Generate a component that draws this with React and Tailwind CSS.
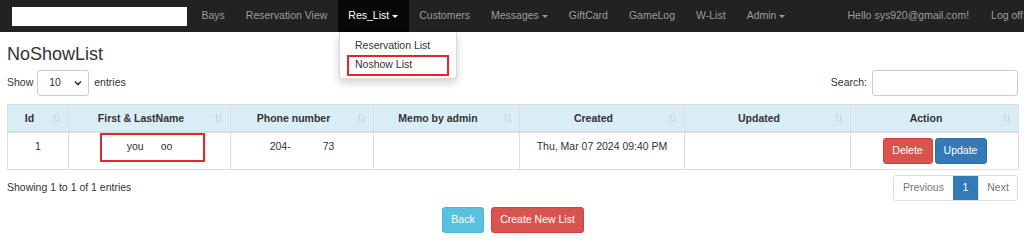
import React from 'react';

const navItems = [
  { label: 'Bays' },
  { label: 'Reservation View' },
  { label: 'Res_List', caret: true, active: true },
  { label: 'Customers' },
  { label: 'Messages', caret: true },
  { label: 'GiftCard' },
  { label: 'GameLog' },
  { label: 'W-List' },
  { label: 'Admin', caret: true },
];

const columns = [
  { label: 'Id', width: 'w-[61px]' },
  { label: 'First & LastName', width: 'w-[162px]' },
  { label: 'Phone number', width: 'w-[143px]' },
  { label: 'Memo by admin', width: 'w-[146px]' },
  { label: 'Created', width: 'w-[165px]' },
  { label: 'Updated', width: 'w-[166px]' },
  { label: 'Action', width: 'w-[168px]' },
];

const Caret = ({ color }) => (
  <span
    className={`ml-[3px] inline-block h-0 w-0 border-x-[3px] border-t-[3px] border-x-transparent align-middle ${color}`}
  />
);

const SortIcon = () => (
  <svg width="9" height="10" viewBox="0 0 9 10" className="absolute right-[7px] top-[8px]">
    <path d="M2.5 9V1M0.8 2.8L2.5 1L4.2 2.8" stroke="#c9d6dd" strokeWidth="1" fill="none" />
    <path d="M6.5 1V9M4.8 7.2L6.5 9L8.2 7.2" stroke="#c9d6dd" strokeWidth="1" fill="none" />
  </svg>
);

const App = () => {
  return (
    <div className="relative min-h-[245px] bg-white font-['Liberation_Sans',Arial,sans-serif] text-[10.5px] text-[#333]">
      {/* Navbar */}
      <div className="flex h-[32px] items-stretch overflow-hidden bg-[#222]">
        <div className="flex items-center pl-[12px]">
          <div className="h-[19px] w-[175px] bg-white" />
        </div>
        <ul className="ml-[4px] flex items-stretch">
          {navItems.map((item) => (
            <li key={item.label} className="relative flex">
              <span
                className={`flex items-center px-[10.5px] ${
                  item.active ? 'bg-[#080808] text-white' : 'text-[#9d9d9d]'
                }`}
              >
                {item.label}
                {item.caret && <Caret color={item.active ? 'border-t-white' : 'border-t-[#9d9d9d]'} />}
              </span>
            </li>
          ))}
        </ul>
        <ul className="ml-auto flex items-stretch text-[#9d9d9d]">
          <li className="flex items-center px-[11px]">Hello sys920@gmail.com!</li>
          <li className="flex items-center pl-[11px] pr-[1px]">Log off</li>
        </ul>
      </div>

      {/* Res_List dropdown */}
      <div className="absolute left-[339px] top-[32px] h-[47px] w-[118px] rounded-b-[3px] border border-t-0 border-black/15 bg-white pt-[4px] shadow-[0_4px_8px_rgba(0,0,0,0.18)]">
        <div className="h-[19px] pl-[15px] leading-[19px] text-[#333]">Reservation List</div>
        <div className="h-[19px] pl-[15px] leading-[19px] text-[#333]">Noshow List</div>
        <div className="absolute left-[7px] top-[23px] h-[21px] w-[102px] border-2 border-[#e3262a]" />
      </div>

      {/* Content */}
      <div className="pl-[7px] pr-[6px]">
        <h2 className="mt-[10px] h-[24px] text-[18px] leading-[24px] font-normal">NoShowList</h2>

        <div className="mt-[4px] flex h-[26px] items-center justify-between">
          <div className="flex items-center">
            <span>Show</span>
            <div className="ml-[4px] flex h-[26px] w-[52px] items-center justify-between rounded-[3px] border border-[#ccc] bg-white pl-[11px] pr-[6px]">
              <span>10</span>
              <svg width="8" height="6" viewBox="0 0 8 6">
                <path d="M1 1.5L4 4.5L7 1.5" stroke="#333" strokeWidth="1.6" fill="none" />
              </svg>
            </div>
            <span className="ml-[5px]">entries</span>
          </div>
          <div className="flex items-center">
            <span>Search:</span>
            <div className="ml-[5px] h-[26px] w-[146px] rounded-[3px] border border-[#ccc] bg-white" />
          </div>
        </div>

        {/* Table */}
        <table className="mt-[8px] w-[1011px] table-fixed border-collapse border border-[#ddd]">
          <thead>
            <tr className="bg-[#d9edf7]">
              {columns.map((col) => (
                <th
                  key={col.label}
                  className={`relative ${col.width} border-x border-b-2 border-[#ddd] pl-[6px] pr-[23px] py-[6px] text-center font-bold leading-[14px]`}
                >
                  {col.label}
                  <SortIcon />
                </th>
              ))}
            </tr>
          </thead>
          <tbody>
            <tr>
              <td className="border border-[#ddd] px-[6px] pt-[6px] text-center align-top leading-[14px]">1</td>
              <td className="relative border border-[#ddd] px-[6px] pt-[6px] text-center align-top leading-[14px]">
                you<span className="inline-block w-[17px]" />oo
                <div className="absolute left-[31px] top-0 h-[29px] w-[105px] border-2 border-[#e3262a]" />
              </td>
              <td className="border border-[#ddd] px-[6px] pt-[6px] text-center align-top leading-[14px]">
                204-<span className="inline-block w-[32px]" />73
              </td>
              <td className="border border-[#ddd] px-[6px] pt-[6px] text-center align-top leading-[14px]"></td>
              <td className="border border-[#ddd] px-[6px] pt-[6px] text-center align-top leading-[14px]">
                Thu, Mar 07 2024 09:40 PM
              </td>
              <td className="border border-[#ddd] px-[6px] pt-[6px] text-center align-top leading-[14px]"></td>
              <td className="border border-[#ddd] px-[6px] pt-[5px] pb-[5px] text-center align-top">
                <div className="flex justify-center gap-[2px]">
                  <button className="h-[26px] w-[50px] rounded-[3px] border border-[#d43f3a] bg-[#d9534f] text-white">
                    Delete
                  </button>
                  <button className="h-[26px] w-[52px] rounded-[3px] border border-[#2e6da4] bg-[#337ab7] text-white">
                    Update
                  </button>
                </div>
              </td>
            </tr>
          </tbody>
        </table>

        {/* Info + pagination */}
        <div className="mt-[5px] flex h-[26px] items-center justify-between">
          <span>Showing 1 to 1 of 1 entries</span>
          <div className="flex h-[26px] overflow-hidden rounded-[3px] border border-[#ddd]">
            <span className="flex w-[59px] items-center justify-center text-[#777]">Previous</span>
            <span className="flex w-[25px] items-center justify-center bg-[#337ab7] text-white">1</span>
            <span className="flex w-[39px] items-center justify-center border-l border-[#ddd] text-[#777]">Next</span>
          </div>
        </div>

        {/* Bottom buttons */}
        <div className="mt-[6px] flex justify-center gap-[7px] pl-[1px]">
          <button className="h-[26px] w-[42px] rounded-[3px] border border-[#46b8da] bg-[#5bc0de] text-white">
            Back
          </button>
          <button className="h-[26px] w-[93px] rounded-[3px] border border-[#d43f3a] bg-[#d9534f] text-white">
            Create New List
          </button>
        </div>
      </div>
    </div>
  );
};

export default App;
